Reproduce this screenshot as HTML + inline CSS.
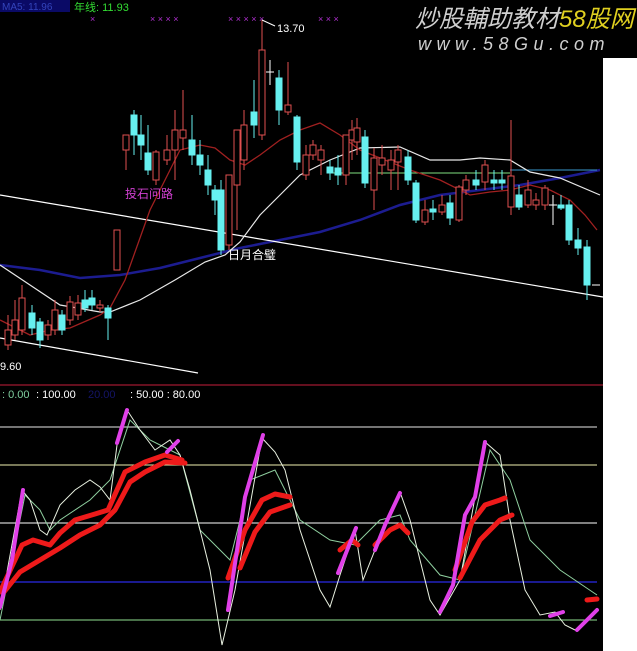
<!DOCTYPE html>
<html><head><meta charset="utf-8"><style>
html,body{margin:0;padding:0;background:#000;}
svg{display:block}
text{font-family:"Liberation Sans","Noto Sans CJK SC",sans-serif}
</style></head><body>
<svg width="637" height="651" viewBox="0 0 637 651" xmlns="http://www.w3.org/2000/svg">
<rect width="637" height="651" fill="#000"/>
<rect x="603" y="58" width="34" height="593" fill="#fff"/>
<rect x="0" y="0" width="70" height="12" fill="#0a0a66"/>
<text x="2" y="10" font-size="10" fill="#3344bb">MA5: 11.96</text>
<text x="74" y="11" font-size="11" fill="#33dd33">年线: 11.93</text>
<g font-size="9" fill="#b030d0">
<text x="90" y="22">×</text><text x="150" y="22">× × × ×</text><text x="228" y="22">× × × × ×</text><text x="318" y="22">×  ×    ×</text>
</g>
<text x="415" y="27" font-size="24" font-style="italic" fill="#cfcfcf">炒股輔助教材</text>
<text x="559" y="27" font-size="24" font-style="italic" fill="#e0d020">58股网</text>
<text x="418" y="50" font-size="18" font-style="italic" fill="#cfcfcf" letter-spacing="5.5">www.58Gu.com</text>
<polyline fill="none" stroke="#1c1c90" stroke-width="2.5" points="0,265 40,270 80,278 120,275 160,268 200,258 240,248 280,240 320,232 360,220 400,205 440,195 480,190 520,185 560,178 600,170"/>
<line x1="0" y1="195" x2="603" y2="297" stroke="#fff" stroke-width="1.2"/>
<line x1="0" y1="338" x2="198" y2="373" stroke="#fff" stroke-width="1.2"/>
<line x1="330" y1="173" x2="510" y2="173" stroke="#7fdf7f"/>
<line x1="510" y1="170" x2="597" y2="170" stroke="#3a9ad0"/>
<polyline fill="none" stroke="#e8e8e8" stroke-width="1.2" points="0,265 30,285 60,305 100,312 110,312 140,300 175,280 205,262 225,255 240,242 260,215 280,195 300,175 330,160 360,148 400,147 430,160 460,160 480,158 510,160 530,172 560,178 600,195"/>
<polyline fill="none" stroke="#a02020" stroke-width="1.3" points="0,320 30,335 50,330 70,328 100,315 110,308 125,280 150,210 180,150 200,145 215,148 230,160 245,165 260,155 280,140 300,130 320,123 340,135 360,150 380,158 410,170 440,180 470,195 490,192 510,190 530,185 550,190 570,200 585,215 597,230"/>
<g stroke-width="1">
<g stroke="#e05050" fill="#000">
<line x1="8" y1="315" x2="8" y2="350"/><rect x="5" y="330" width="6" height="15"/>
<line x1="15" y1="300" x2="15" y2="340"/><rect x="12" y="320" width="6" height="15"/>
<line x1="22" y1="285" x2="22" y2="335"/><rect x="19" y="298" width="6" height="32"/>
<line x1="48" y1="320" x2="48" y2="340"/><rect x="45" y="325" width="6" height="10"/>
<line x1="55" y1="300" x2="55" y2="335"/><rect x="52" y="310" width="6" height="20"/>
<line x1="70" y1="296" x2="70" y2="325"/><rect x="67" y="302" width="6" height="18"/>
<line x1="78" y1="295" x2="78" y2="320"/><rect x="75" y="303" width="6" height="12"/>
<line x1="100" y1="300" x2="100" y2="312"/><rect x="97" y="305" width="6" height="3"/>
<rect x="114" y="230" width="6" height="40"/>
<line x1="126" y1="135" x2="126" y2="170"/><rect x="123" y="135" width="6" height="15"/>
<line x1="156" y1="150" x2="156" y2="185"/><rect x="153" y="152" width="6" height="28"/>
<line x1="167" y1="135" x2="167" y2="165"/><rect x="164" y="150" width="6" height="10"/>
<line x1="175" y1="110" x2="175" y2="180"/><rect x="172" y="130" width="6" height="20"/>
<line x1="183" y1="90" x2="183" y2="150"/><rect x="180" y="130" width="6" height="8"/>
<line x1="229" y1="175" x2="229" y2="250"/><rect x="226" y="175" width="6" height="70"/>
<line x1="237" y1="130" x2="237" y2="230"/><rect x="234" y="130" width="6" height="55"/>
<line x1="244" y1="110" x2="244" y2="170"/><rect x="241" y="125" width="6" height="35"/>
<line x1="262" y1="20" x2="262" y2="140"/><rect x="259" y="50" width="6" height="85"/>
<line x1="288" y1="62" x2="288" y2="115"/><rect x="285" y="105" width="6" height="7"/>
<line x1="306" y1="145" x2="306" y2="180"/><rect x="303" y="155" width="6" height="20"/>
<line x1="313" y1="140" x2="313" y2="160"/><rect x="310" y="145" width="6" height="10"/>
<line x1="321" y1="145" x2="321" y2="175"/><rect x="318" y="150" width="6" height="10"/>
<line x1="346" y1="135" x2="346" y2="185"/><rect x="343" y="135" width="6" height="40"/>
<line x1="352" y1="120" x2="352" y2="160"/><rect x="349" y="130" width="6" height="10"/>
<line x1="357" y1="118" x2="357" y2="155"/><rect x="354" y="128" width="6" height="14"/>
<line x1="374" y1="148" x2="374" y2="210"/><rect x="371" y="158" width="6" height="32"/>
<line x1="382" y1="145" x2="382" y2="175"/><rect x="379" y="158" width="6" height="7"/>
<line x1="391" y1="150" x2="391" y2="190"/><rect x="388" y="160" width="6" height="10"/>
<line x1="398" y1="145" x2="398" y2="190"/><rect x="395" y="150" width="6" height="12"/>
<line x1="425" y1="200" x2="425" y2="225"/><rect x="422" y="210" width="6" height="12"/>
<line x1="442" y1="195" x2="442" y2="215"/><rect x="439" y="205" width="6" height="7"/>
<line x1="459" y1="185" x2="459" y2="222"/><rect x="456" y="187" width="6" height="33"/>
<line x1="466" y1="175" x2="466" y2="195"/><rect x="463" y="180" width="6" height="10"/>
<line x1="485" y1="160" x2="485" y2="190"/><rect x="482" y="165" width="6" height="17"/>
<line x1="511" y1="120" x2="511" y2="215"/><rect x="508" y="176" width="6" height="31"/>
<line x1="528" y1="180" x2="528" y2="208"/><rect x="525" y="190" width="6" height="15"/>
<line x1="536" y1="193" x2="536" y2="210"/><rect x="533" y="200" width="6" height="5"/>
<line x1="545" y1="185" x2="545" y2="210"/><rect x="542" y="188" width="6" height="17"/>
</g>
<g stroke="#66f0f0" fill="#66f0f0">
<line x1="32" y1="305" x2="32" y2="335"/><rect x="29" y="313" width="6" height="15"/>
<line x1="40" y1="318" x2="40" y2="348"/><rect x="37" y="322" width="6" height="18"/>
<line x1="62" y1="310" x2="62" y2="335"/><rect x="59" y="315" width="6" height="15"/>
<line x1="85" y1="290" x2="85" y2="312"/><rect x="82" y="300" width="6" height="8"/>
<line x1="92" y1="290" x2="92" y2="310"/><rect x="89" y="298" width="6" height="7"/>
<line x1="108" y1="305" x2="108" y2="340"/><rect x="105" y="308" width="6" height="10"/>
<line x1="134" y1="110" x2="134" y2="155"/><rect x="131" y="115" width="6" height="20"/>
<line x1="141" y1="115" x2="141" y2="160"/><rect x="138" y="135" width="6" height="10"/>
<line x1="148" y1="125" x2="148" y2="175"/><rect x="145" y="153" width="6" height="17"/>
<line x1="192" y1="115" x2="192" y2="165"/><rect x="189" y="140" width="6" height="15"/>
<line x1="200" y1="140" x2="200" y2="175"/><rect x="197" y="155" width="6" height="10"/>
<line x1="208" y1="155" x2="208" y2="195"/><rect x="205" y="170" width="6" height="15"/>
<line x1="215" y1="185" x2="215" y2="215"/><rect x="212" y="190" width="6" height="10"/>
<line x1="221" y1="180" x2="221" y2="255"/><rect x="218" y="190" width="6" height="60"/>
<line x1="254" y1="80" x2="254" y2="138"/><rect x="251" y="112" width="6" height="13"/>
<line x1="279" y1="70" x2="279" y2="125"/><rect x="276" y="78" width="6" height="32"/>
<line x1="297" y1="115" x2="297" y2="170"/><rect x="294" y="117" width="6" height="45"/>
<line x1="330" y1="160" x2="330" y2="180"/><rect x="327" y="167" width="6" height="6"/>
<line x1="338" y1="155" x2="338" y2="185"/><rect x="335" y="168" width="6" height="7"/>
<line x1="365" y1="130" x2="365" y2="188"/><rect x="362" y="137" width="6" height="46"/>
<line x1="408" y1="150" x2="408" y2="185"/><rect x="405" y="157" width="6" height="23"/>
<line x1="416" y1="180" x2="416" y2="223"/><rect x="413" y="183" width="6" height="37"/>
<line x1="433" y1="200" x2="433" y2="220"/><rect x="430" y="209" width="6" height="3"/>
<line x1="450" y1="195" x2="450" y2="225"/><rect x="447" y="203" width="6" height="15"/>
<line x1="476" y1="170" x2="476" y2="190"/><rect x="473" y="180" width="6" height="5"/>
<line x1="494" y1="170" x2="494" y2="190"/><rect x="491" y="180" width="6" height="3"/>
<line x1="502" y1="170" x2="502" y2="190"/><rect x="499" y="180" width="6" height="3"/>
<line x1="519" y1="185" x2="519" y2="210"/><rect x="516" y="195" width="6" height="12"/>
<line x1="561" y1="195" x2="561" y2="210"/><rect x="558" y="205" width="6" height="3"/>
<line x1="569" y1="200" x2="569" y2="245"/><rect x="566" y="205" width="6" height="35"/>
<line x1="578" y1="228" x2="578" y2="255"/><rect x="575" y="240" width="6" height="8"/>
<line x1="587" y1="240" x2="587" y2="300"/><rect x="584" y="247" width="6" height="38"/>
</g>
<g stroke="#fff">
<line x1="270" y1="60" x2="270" y2="85"/><line x1="266" y1="72" x2="274" y2="72"/>
<line x1="553" y1="195" x2="553" y2="225"/><line x1="549" y1="205" x2="557" y2="205"/>
<line x1="592" y1="285" x2="600" y2="285"/>
</g>
</g>
<line x1="262" y1="20" x2="275" y2="26" stroke="#fff"/>
<text x="277" y="32" font-size="11" fill="#fff">13.70</text>
<text x="0" y="370" font-size="11" fill="#fff">9.60</text>
<text x="125" y="198" font-size="12" fill="#d040d0">投石问路</text>
<text x="228" y="259" font-size="12" fill="#fff">日月合璧</text>
<line x1="0" y1="385" x2="603" y2="385" stroke="#a01830" stroke-width="1.3"/>
<text x="2" y="398" font-size="11" fill="#7fcf9f">: 0.00</text>
<text x="36" y="398" font-size="11" fill="#fff">: 100.00</text>
<text x="88" y="398" font-size="11" fill="#141466">20.00</text>
<text x="130" y="398" font-size="11" fill="#fff">: 50.00 : 80.00</text>
<line x1="0" y1="427" x2="597" y2="427" stroke="#e8e8e8"/>
<line x1="0" y1="465" x2="597" y2="465" stroke="#f0f0b0"/>
<line x1="0" y1="523" x2="597" y2="523" stroke="#fff"/>
<line x1="0" y1="582" x2="597" y2="582" stroke="#1a1a90" stroke-width="2"/>
<line x1="0" y1="620" x2="597" y2="620" stroke="#8fdf8f"/>
<polyline fill="none" stroke="#8fcf9f" stroke-width="1" points="0,620 25,495 40,510 50,530 60,520 90,500 110,480 130,420 150,440 180,455 200,530 230,560 250,480 275,470 300,520 330,540 355,545 380,520 400,515 410,540 440,575 460,580 490,450 510,480 530,540 560,570 597,595"/>
<polyline fill="none" stroke="#e8f0e0" stroke-width="1" points="0,610 22,490 30,500 40,530 47,535 60,505 75,490 90,480 100,487 110,500 117,445 127,410 140,430 155,450 170,440 180,455 190,490 210,570 222,645 235,590 262,438 275,452 285,470 300,530 320,590 330,607 340,575 355,530 363,580 375,550 400,492 410,520 420,560 430,600 440,615 460,580 485,442 500,455 510,520 525,590 540,615 555,612 565,625 575,630 597,610"/>
<g fill="none" stroke="#ee1a1a" stroke-width="5" stroke-linecap="round" stroke-linejoin="round">
<polyline points="0,592 15,560 22,545 33,540 50,545 60,533 75,520 95,514 108,510 125,472 145,462 165,455 182,460"/>
<polyline points="4,592 20,572 40,560 60,548 80,535 100,525 115,510 130,482 145,472 165,462 185,463"/>
<polyline points="228,578 245,530 262,500 275,494 290,497"/>
<polyline points="240,568 255,532 270,512 290,505"/>
<polyline points="340,550 352,540 358,545"/>
<polyline points="375,545 390,530 400,525 408,533"/>
<polyline points="455,570 472,522 485,505 500,500 505,498"/>
<polyline points="460,578 480,540 500,520 512,515"/>
<polyline points="587,600 597,599"/>
</g>
<g fill="none" stroke="#e040e8" stroke-width="4" stroke-linecap="round" stroke-linejoin="round">
<polyline points="0,607 12,560 23,490"/>
<polyline points="117,443 127,410"/>
<polyline points="167,452 178,441"/>
<polyline points="228,610 245,497 263,435"/>
<polyline points="338,573 356,528"/>
<polyline points="375,550 385,525 400,493"/>
<polyline points="440,612 453,585 465,515 475,497 485,442"/>
<polyline points="550,616 563,612"/>
<polyline points="577,630 597,610"/>
</g>
</svg>
</body></html>
